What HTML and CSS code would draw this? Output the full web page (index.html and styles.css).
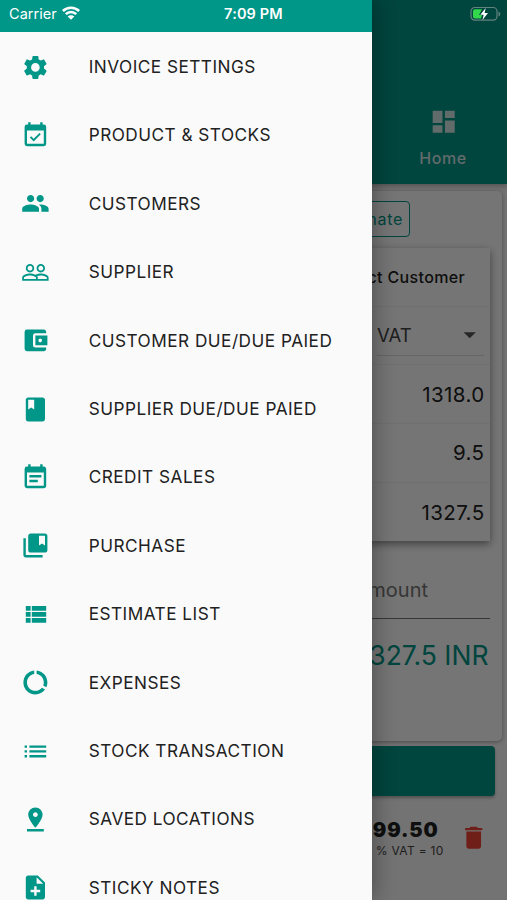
FILE: index.html
```html
<!DOCTYPE html>
<html lang="en">
<head>
<meta charset="utf-8">
<title>Invoice</title>
<link rel="stylesheet" href="styles.css">
</head>
<body>
<div class="screen">
  <main class="app">
    <header class="app-header">
      <div class="tab">
        <svg class="icon" viewBox="0 0 24 24"><path d="M3 13h8V3H3v10zm0 8h8v-6H3v6zm10 0h8V11h-8v10zm0-18v6h8V3h-8z"/></svg>
        <span class="tab-label">Home</span>
      </div>
    </header>
    <section class="panel">
      <button class="outline-btn">Estimate</button>
      <div class="summary">
        <div class="row customer">Select Customer</div>
        <div class="row vat">
          <div class="select"><span>VAT</span><svg class="icon" viewBox="0 0 24 24"><path d="M7 10l5 5 5-5z"/></svg></div>
        </div>
        <div class="row amount">1318.0</div>
        <div class="row amount">9.5</div>
        <div class="row amount">1327.5</div>
      </div>
      <div class="field">Amount</div>
      <div class="total">1327.5 INR</div>
    </section>
    <button class="solid-btn" aria-label="Save"></button>
    <div class="item">
      <div class="item-text">
        <div class="price">99.50</div>
        <div class="tax">% VAT = 10</div>
      </div>
      <svg class="icon trash" viewBox="0 0 24 24"><path d="M6 19c0 1.100.9 2 2 2h8c1.100 0 2-.9 2-2V7H6v12zM19 4h-3.500l-1-1h-5l-1 1H5v2h14V4z"/></svg>
    </div>
  </main>
  <div class="scrim"></div>

  <nav class="drawer">
    <div class="drawer-top"></div>
    <a class="entry"><svg class="icon" viewBox="0 0 24 24"><path d="M19.140 12.940c.04-.3.060-.61.060-.94 0-.32-.02-.64-.07-.94l2.030-1.580c.18-.14.230-.41.120-.61l-1.920-3.320c-.12-.22-.37-.29-.59-.22l-2.390.96c-.5-.38-1.030-.7-1.620-.94l-.36-2.540c-.04-.24-.24-.41-.48-.41h-3.840c-.24 0-.43.17-.47.41l-.36 2.540c-.59.24-1.130.57-1.620.94l-2.390-.96c-.22-.08-.47 0-.59.22L2.740 8.870c-.12.210-.08.470.120.610l2.030 1.580c-.05.3-.09.630-.09.940s.02.640.070.940l-2.030 1.580c-.18.140-.23.410-.12.610l1.920 3.320c.12.220.370.290.590.220l2.390-.96c.5.380 1.030.7 1.620.940l.36 2.540c.05.240.240.410.480.410h3.840c.24 0 .44-.17.470-.41l.36-2.540c.59-.24 1.130-.56 1.620-.94l2.390.96c.22.080.470 0 .59-.22l1.920-3.320c.12-.22.070-.47-.12-.61l-2.010-1.580zM12 15.600c-1.980 0-3.600-1.620-3.600-3.600s1.620-3.600 3.600-3.600 3.600 1.620 3.600 3.600-1.620 3.600-3.600 3.600z"/></svg><span>INVOICE SETTINGS</span></a>
    <a class="entry"><svg class="icon" viewBox="0 0 24 24"><path d="M19 3h-1V1h-2v2H8V1H6v2H5a2 2 0 0 0-2 2v14a2 2 0 0 0 2 2h14a2 2 0 0 0 2-2V5a2 2 0 0 0-2-2zm0 16H5V8h14v11zM16.500 11.060l-1.060-1.060-4.880 4.880-2.110-2.110-1.060 1.060L10.560 17z"/></svg><span>PRODUCT &amp; STOCKS</span></a>
    <a class="entry"><svg class="icon" viewBox="0 0 24 24"><path d="M16 11c1.660 0 2.990-1.340 2.990-3S17.660 5 16 5s-3 1.340-3 3 1.340 3 3 3zm-8 0c1.660 0 2.990-1.340 2.990-3S9.660 5 8 5 5 6.340 5 8s1.340 3 3 3zm0 2c-2.330 0-7 1.170-7 3.500V19h14v-2.500C15 14.170 10.330 13 8 13zm8 0c-.29 0-.62.020-.97.050C16.190 13.890 17 15.020 17 16.500V19h6v-2.500c0-2.330-4.670-3.500-7-3.500z"/></svg><span>CUSTOMERS</span></a>
    <a class="entry"><svg class="icon" viewBox="0 0 24 24"><path d="M16.500 13c-1.200 0-3.070.34-4.500 1-1.430-.67-3.300-1-4.500-1C5.330 13 1 14.080 1 16.250V19h22v-2.750C23 14.080 18.670 13 16.500 13zm-4 4.500h-10v-1.250c0-.54 2.560-1.750 5-1.750s5 1.210 5 1.750v1.250zm9 0H14v-1.250c0-.46-.2-.86-.52-1.220.88-.3 1.960-.53 3.020-.53 2.440 0 5 1.210 5 1.750v1.250zM7.500 12c1.930 0 3.500-1.570 3.500-3.500S9.430 5 7.500 5 4 6.570 4 8.500 5.570 12 7.500 12zm0-5.500c1.100 0 2 .9 2 2s-.9 2-2 2-2-.9-2-2 .9-2 2-2zm9 5.500c1.930 0 3.500-1.570 3.500-3.500S18.430 5 16.500 5 13 6.570 13 8.500s1.570 3.500 3.500 3.500zm0-5.500c1.100 0 2 .9 2 2s-.9 2-2 2-2-.9-2-2 .9-2 2-2z"/></svg><span>SUPPLIER</span></a>
    <a class="entry"><svg class="icon" viewBox="0 0 24 24"><path d="M21 18v1c0 1.100-.9 2-2 2H5a2 2 0 0 1-2-2V5a2 2 0 0 1 2-2h14c1.100 0 2 .9 2 2v1h-9a2 2 0 0 0-2 2v8a2 2 0 0 0 2 2h9zm-9-2h10V8H12v8zm4-2.500c-.83 0-1.500-.67-1.500-1.500s.67-1.500 1.500-1.500 1.500.67 1.500 1.500-.67 1.500-1.500 1.500z"/></svg><span>CUSTOMER DUE/DUE PAIED</span></a>
    <a class="entry"><svg class="icon" viewBox="0 0 24 24"><path d="M18 2H6c-1.100 0-2 .9-2 2v16c0 1.100.9 2 2 2h12c1.100 0 2-.9 2-2V4c0-1.100-.9-2-2-2zM6 4h5v8l-2.500-1.500L6 12V4z"/></svg><span>SUPPLIER DUE/DUE PAIED</span></a>
    <a class="entry"><svg class="icon" viewBox="0 0 24 24"><path d="M17 10H7v2h10v-2zm2-7h-1V1h-2v2H8V1H6v2H5a2 2 0 0 0-2 2v14a2 2 0 0 0 2 2h14c1.100 0 2-.9 2-2V5c0-1.100-.9-2-2-2zm0 16H5V8h14v11zm-5-5H7v2h7v-2z"/></svg><span>CREDIT SALES</span></a>
    <a class="entry"><svg class="icon" viewBox="0 0 24 24"><path d="M4 6H2v14c0 1.100.9 2 2 2h14v-2H4V6zM20 2H8c-1.100 0-2 .9-2 2v12c0 1.100.9 2 2 2h12c1.100 0 2-.9 2-2V4c0-1.100-.9-2-2-2zm0 10l-2.500-1.500L15 12V4h5v8z"/></svg><span>PURCHASE</span></a>
    <a class="entry"><svg class="icon" viewBox="0 0 24 24"><path d="M4 14h4v-4H4v4zm0 5h4v-4H4v4zM4 9h4V5H4v4zm5 5h12v-4H9v4zm0 5h12v-4H9v4zM9 5v4h12V5H9z"/></svg><span>ESTIMATE LIST</span></a>
    <a class="entry"><svg class="icon" viewBox="0 0 24 24"><path d="M13 2.050v3.030c3.390.49 6 3.390 6 6.920 0 .9-.18 1.750-.48 2.540l2.600 1.530c.56-1.240.880-2.620.880-4.070 0-5.180-3.950-9.450-9-9.950zM12 19c-3.870 0-7-3.130-7-7 0-3.530 2.610-6.430 6-6.920V2.050c-5.060.5-9 4.760-9 9.950 0 5.520 4.470 10 9.990 10 3.310 0 6.240-1.610 8.060-4.090l-2.600-1.530C16.170 17.980 14.210 19 12 19z"/></svg><span>EXPENSES</span></a>
    <a class="entry"><svg class="icon" viewBox="0 0 24 24"><path d="M3 13h2v-2H3v2zm0 4h2v-2H3v2zm0-8h2V7H3v2zm4 4h14v-2H7v2zm0 4h14v-2H7v2zM7 7v2h14V7H7z"/></svg><span>STOCK TRANSACTION</span></a>
    <a class="entry"><svg class="icon" viewBox="0 0 24 24"><path d="M18 8c0-3.310-2.690-6-6-6S6 4.690 6 8c0 4.500 6 11 6 11s6-6.500 6-11zm-8 0c0-1.100.9-2 2-2s2 .9 2 2-.89 2-2 2c-1.100 0-2-.9-2-2zM5 20v2h14v-2H5z"/></svg><span>SAVED LOCATIONS</span></a>
    <a class="entry"><svg class="icon" viewBox="0 0 24 24"><path d="M14 2H6c-1.100 0-1.990.9-1.990 2L4 20c0 1.100.89 2 1.990 2H18c1.100 0 2-.9 2-2V8l-6-6zm2 14h-3v3h-2v-3H8v-2h3v-3h2v3h3v2zm-3-7V3.500L18.500 9H13z"/></svg><span>STICKY NOTES</span></a>
  </nav>

  <div class="status">
    <div class="carrier"><span>Carrier</span>
      <svg class="wifi" viewBox="0 0 18 14"><g fill="none" stroke="#fff" stroke-width="2.600"><path d="M.9 5a11.600 11.600 0 0 1 16.200 0"/><path d="M3.800 8.200a7.300 7.300 0 0 1 10.400 0"/></g><path fill="#fff" d="M9 13.800L5.700 10.500a4.700 4.700 0 0 1 6.600 0z"/></svg>
    </div>
    <div class="time">7:09 PM</div>
    <svg class="battery" viewBox="0 0 31 16"><rect x="1" y="1.500" width="26" height="12.600" rx="3.800" fill="none" stroke="#62847f" stroke-width="1.200"/><path d="M28.500 5.500v5c1.100-.4 1.800-1.300 1.800-2.500s-.7-2.100-1.800-2.500z" fill="#62847f"/><path d="M5 3.300h7L9 9h3l-1 3.500H5A2 2 0 0 1 3 10.500V5.300a2 2 0 0 1 2-2z" fill="#32d74b"/><path d="M15.700 2L10.300 8.700h3.300L12.500 14l5.500-7.100h-3.400z" fill="#fff"/></svg>
  </div>
</div>
</body>
</html>
```
FILE: styles.css
```css
* { box-sizing: border-box; }
body {
  margin: 0;
  font-family: Inter, "Liberation Sans", sans-serif;
  color: #212121;
}
button { font: inherit; }
.screen {
  position: relative;
  width: 507px;
  height: 900px;
  overflow: hidden;
  background: #fafafa;
}
.icon {
  width: 29.4px;
  height: 29.4px;
  flex: none;
  fill: currentColor;
}

/* page behind the drawer */
.app {
  display: flex;
  flex-direction: column;
  height: 900px;
}
.app-header {
  height: 184px;
  flex: none;
  display: flex;
  justify-content: flex-end;
  padding: 107px 24px 0;
  background: #009688;
  color: #d3e9e7;
  box-shadow: 0 2px 5px rgba(0, 0, 0, .3);
}
.tab {
  width: 80px;
  display: flex;
  flex-direction: column;
  align-items: center;
}
.tab .icon { margin-left: 1px; }
.tab-label {
  margin-top: 11px;
  font-size: 16px;
  line-height: 22px;
  font-weight: 500;
  letter-spacing: .6px;
}
.panel {
  height: 550px;
  flex: none;
  display: flex;
  flex-direction: column;
  align-items: flex-end;
  margin: 7px 5px 0;
  padding: 10px 12px 0;
  border-radius: 5px;
  background: #fff;
  box-shadow: 0 1px 4px rgba(0, 0, 0, .35);
}
.outline-btn {
  height: 36px;
  margin-right: 80px;
  padding: 0 6px;
  border: 1.500px solid #009688;
  border-radius: 4px;
  background: none;
  color: #009688;
  font-size: 16px;
  font-weight: 400;
  letter-spacing: .7px;
}
.summary {
  width: 473px;
  margin-top: 11px;
  background: #fff;
  box-shadow: 0 3px 8px rgba(0, 0, 0, .45);
}
.row {
  height: 58.700px;
  display: flex;
  align-items: center;
  justify-content: flex-end;
  padding: 0 6px;
  border-bottom: 1px solid #f5f5f5;
}
.row:last-child { border-bottom: 0; }
.customer {
  padding-right: 25px;
  font-size: 16px;
  font-weight: 500;
  letter-spacing: .35px;
}
.select {
  width: 107px;
  height: 40px;
  display: flex;
  align-items: center;
  justify-content: space-between;
  border-bottom: 1px solid #dcdcdc;
  font-size: 18.500px;
  color: #444;
}
.select .icon { color: #555; }
.amount { font-size: 20.500px; letter-spacing: .4px; }
.row.amount { padding-right: 5.500px; }
.field {
  width: 473px;
  height: 58px;
  display: flex;
  align-items: center;
  justify-content: flex-end;
  margin-top: 20px;
  padding-right: 62px;
  border-bottom: 1px solid #777;
  font-size: 20px;
  color: #777;
}
.total {
  margin: 19px 1.500px 0 0;
  font-size: 26.500px;
  line-height: 34px;
  color: #009688;
}
.solid-btn {
  height: 50px;
  flex: none;
  margin: 5px 12px 0;
  border: 0;
  border-radius: 4px;
  background: #009688;
  box-shadow: 0 2px 3px rgba(0, 0, 0, .3);
}
.item {
  display: flex;
  justify-content: flex-end;
  align-items: center;
  margin-top: 22px;
  padding-right: 19px;
}
.item-text {
  margin-right: 15px;
  text-align: right;
}
.price {
  margin-right: 5px;
  font-size: 20px;
  line-height: 25px;
  font-weight: 900;
  letter-spacing: .9px;
}
.tax { font-size: 12px; line-height: 16px; letter-spacing: .3px; color: #444; }
.trash { color: #f44336; margin-bottom: 1px; }

.scrim {
  position: absolute;
  inset: 0;
  background: rgba(0, 0, 0, .54);
}

/* navigation drawer */
.drawer {
  position: absolute;
  inset: 0 auto 0 0;
  width: 372.300px;
  overflow: hidden;
  background: #fafafa;
  box-shadow: 3px 0 20px rgba(0, 0, 0, .3);
}
.drawer-top { height: 32.300px; background: #009688; }
.entry {
  display: flex;
  align-items: center;
  height: 68.420px;
  padding-left: 20.600px;
  font-size: 17.200px;
  letter-spacing: .49px;
}
.entry .icon {
  width: 28.800px;
  height: 28.800px;
  margin: 1px 39.300px 0 0;
  color: #009688;
}

/* system status bar */
.status {
  position: absolute;
  inset: 0 0 auto 0;
  height: 27px;
  display: grid;
  grid-template-columns: 1fr auto 1fr;
  align-items: center;
  padding: 0 6px 0 9px;
  color: #fff;
  font-size: 14.500px;
}
.carrier { display: flex; align-items: center; gap: 5px; }
.carrier span { letter-spacing: .05px; }
.wifi { width: 18px; height: 14px; margin-bottom: 1px; }
.time { margin-right: 3px; font-weight: 600; letter-spacing: .15px; }
.battery { width: 31px; height: 16px; justify-self: end; }
```
